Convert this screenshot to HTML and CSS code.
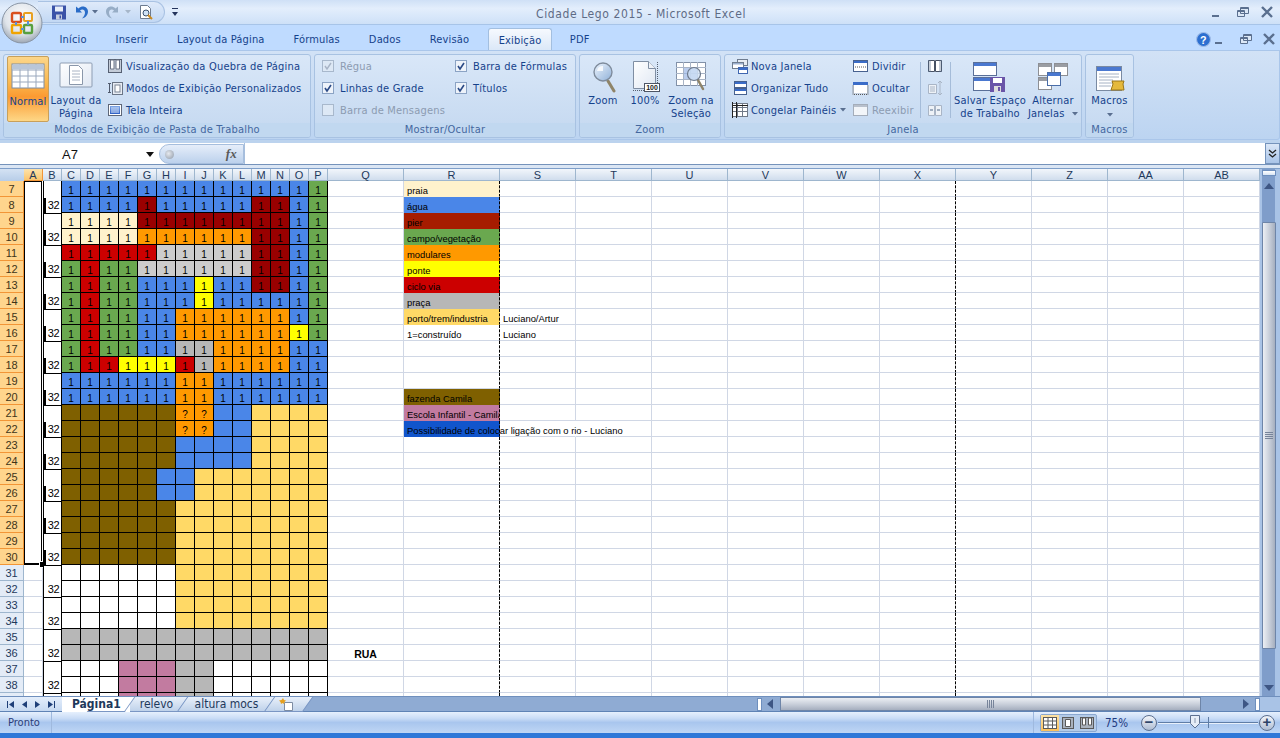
FILE: index.html
```html
<!DOCTYPE html>
<html lang="pt">
<head>
<meta charset="utf-8">
<title>Cidade Lego 2015 - Microsoft Excel</title>
<link rel="stylesheet" href="styles.css">
</head>
<body>
<svg class="defs" aria-hidden="true">
  <defs>
    <linearGradient id="gBlue" x1="0" y1="0" x2="0" y2="1"><stop offset="0" stop-color="#7fa6e6"/><stop offset="1" stop-color="#2d5fc4"/></linearGradient>
    <linearGradient id="gPage" x1="0" y1="0" x2="1" y2="1"><stop offset="0" stop-color="#fff"/><stop offset="1" stop-color="#dfe7f3"/></linearGradient>
    <linearGradient id="gGlass" x1="0" y1="0" x2="1" y2="1"><stop offset="0" stop-color="#eef5fd"/><stop offset="1" stop-color="#8fb0d8"/></linearGradient>
    <radialGradient id="gOrb" cx=".5" cy=".35" r=".7"><stop offset="0" stop-color="#fff"/><stop offset=".6" stop-color="#dfe4ea"/><stop offset="1" stop-color="#8f9aa8"/></radialGradient>
    <symbol id="chk" viewBox="0 0 12 12"><rect x=".5" y=".5" width="11" height="11" fill="#eef3fa" stroke="#8ba3c4"/><path d="M3 6l2 3 4-6" fill="none" stroke="#2b4a86" stroke-width="1.6"/></symbol>
    <symbol id="chkoff" viewBox="0 0 12 12"><rect x=".5" y=".5" width="11" height="11" fill="#dde8f5" stroke="#a8b8cc"/><path d="M3 6l2 3 4-6" fill="none" stroke="#a8b4c6" stroke-width="1.4"/></symbol>
    <symbol id="empty" viewBox="0 0 12 12"><rect x=".5" y=".5" width="11" height="11" fill="#dde8f5" stroke="#a8b8cc"/></symbol>
  </defs>
</svg>

<div class="app">
  <svg class="orb" viewBox="0 0 42 42" aria-hidden="true">
    <circle cx="21" cy="21" r="20" fill="url(#gOrb)" stroke="#8a96a6"/>
    <rect x="11" y="11" width="9" height="9" rx="1.5" fill="none" stroke="#d9501e" stroke-width="2.4"/>
    <rect x="23" y="11" width="8" height="8" rx="1" fill="none" stroke="#e8a020" stroke-width="2"/>
    <rect x="11" y="23" width="9" height="8" rx="1" fill="none" stroke="#f0a400" stroke-width="2.4"/>
    <rect x="23" y="23" width="8" height="8" rx="1" fill="none" stroke="#58a040" stroke-width="2.4"/>
    <path d="M20 15h3M15 20v3M27 19v4M20 27h3" stroke="#5b90d8" stroke-width="2"/>
  </svg>

  <header class="titlebar">
    <div class="tb-left">
      <div class="qa">
        <svg class="qi" viewBox="0 0 14 14"><path d="M0 0h14v14H0z" fill="#3a52a8"/><path d="M3 1h8v5H3z" fill="#e8eef8"/><path d="M4 9h6v5H4z" fill="#c7cfdf"/><path d="M7.5 10h1.500v3H7.500z" fill="#3a52a8"/></svg>
        <svg class="qi m9 w13" viewBox="0 0 13 14"><path d="M1 1v6h6L5 5c2-2 5-1 5 2 0 2-1 4-3 6 4-1 6-4 6-7C13 2 8-1 3.500 3z" fill="#2a6cc8"/></svg>
        <svg class="dd m4" viewBox="0 0 6 4"><path d="M0 0h6L3 3.500z" fill="#5a6f90"/></svg>
        <svg class="qi m8 w13" viewBox="0 0 13 14"><path d="M12 1v6H6l2-2C6 3 3 4 3 7c0 2 1 4 3 6-4-1-6-4-6-7C0 2 5-1 9.500 3z" fill="#97adc6"/></svg>
        <svg class="dd m6" viewBox="0 0 6 4"><path d="M0 0h6L3 3.500z" fill="#a6b6c9"/></svg>
        <svg class="qi m8" viewBox="0 0 14 15"><path d="M1.500.500h7l3 3v10h-10z" fill="#fff" stroke="#6d7b8f"/><circle cx="7" cy="8" r="3" fill="#cfe2f6" stroke="#39506e"/><path d="M9 10l4 4" stroke="#c98a20" stroke-width="2"/></svg>
      </div>
      <svg class="custom" viewBox="0 0 7 9"><path d="M0 0h6v1H0zM0 4h6L3 8z" fill="#24345c"/></svg>
    </div>
    <h1 class="doc-title">Cidade Lego 2015 - Microsoft Excel</h1>
    <div class="winbtns">
      <svg class="wb" viewBox="0 0 12 12"><path d="M1 9h7v2H1z" fill="#5a6f8f"/></svg>
      <svg class="wb m14" viewBox="0 0 12 12"><path d="M3.500 1.500h8v6h-8zM.5 4.500h7v6h-7z" fill="#dce8f6" stroke="#5a6f8f"/><path d="M1 4h6v2H1zM4 1h7v2H4z" fill="#5a6f8f"/></svg>
      <svg class="wb m12" viewBox="0 0 12 12"><path d="M1 1l10 10M11 1L1 11" stroke="#5a6f8f" stroke-width="2.400"/></svg>
    </div>
  </header>

  <nav class="tabs">
    <span class="tab">Início</span>
    <span class="tab">Inserir</span>
    <span class="tab">Layout da Página</span>
    <span class="tab">Fórmulas</span>
    <span class="tab">Dados</span>
    <span class="tab">Revisão</span>
    <span class="tab active">Exibição</span>
    <span class="tab">PDF</span>
    <div class="winbtns inner">
      <svg class="help" viewBox="0 0 14 14"><circle cx="7" cy="7" r="6.500" fill="#2c6fd0" stroke="#9fbce8"/><text x="7" y="11" class="helpq">?</text></svg>
      <svg class="wb m3" viewBox="0 0 12 12"><path d="M1 9h7v2H1z" fill="#5a6f8f"/></svg>
      <svg class="wb m14" viewBox="0 0 12 12"><path d="M3.500 1.500h8v6h-8zM.5 4.500h7v6h-7z" fill="#dce8f6" stroke="#5a6f8f"/><path d="M1 4h6v2H1zM4 1h7v2H4z" fill="#5a6f8f"/></svg>
      <svg class="wb m11" viewBox="0 0 12 12"><path d="M1 1l10 10M11 1L1 11" stroke="#5a6f8f" stroke-width="2.400"/></svg>
    </div>
  </nav>

  <section class="ribbon">
    <div class="group g1">
      <div class="gbody">
        <div class="lg normal">
          <svg class="ic-lg" viewBox="0 0 36 34"><rect x="2" y="4" width="32" height="24" fill="#fff" stroke="#7d8ca3"/><path d="M2 10h32M2 16h32M2 22h32M10 4v24M18 4v24M26 4v24" stroke="#9aa8bd"/><rect x="2.500" y="4.500" width="31" height="5" fill="#b9c6d8"/></svg>
          <span>Normal</span>
        </div>
        <div class="lg layout">
          <svg class="ic-lg" viewBox="0 0 36 34"><rect x="2" y="4" width="32" height="24" rx="1" fill="url(#gPage)" stroke="#8d9db3"/><path d="M11.500 6.500h9l4 4v15h-13z" fill="#fff" stroke="#8a97aa"/><path d="M14 12h8M14 15h8M14 18h8M14 21h8" stroke="#aab4c4"/></svg>
          <span>Layout da<br>Página</span>
        </div>
        <ul class="list l1">
          <li><svg class="ic-sm" viewBox="0 0 16 16"><rect x="1.500" y="1.500" width="13" height="13" fill="#c4ccd8" stroke="#566072"/><path d="M3.500 2v9h3.500V2zM9 2v9h3.500V2z" fill="#fff" stroke="#6c7485"/></svg>Visualização da Quebra de Página</li>
          <li><svg class="ic-sm" viewBox="0 0 16 16"><path d="M1 3.500h3M2.500 3.500v9M1 12.500h3" stroke="#505a6c" fill="none"/><rect x="5.500" y="2.500" width="10" height="12" fill="#e8edf4" stroke="#6a7586"/><rect x="8" y="5" width="5" height="7" fill="#fff" stroke="#7b8595"/></svg>Modos de Exibição Personalizados</li>
          <li><svg class="ic-sm" viewBox="0 0 16 16"><rect x="1.500" y="2.500" width="13" height="11" fill="#fff" stroke="#5e6778"/><rect x="3" y="4" width="10" height="8" fill="url(#gBlue)"/><path d="M4 6h8M4 8h8M4 10h8" stroke="#dce8fa"/></svg>Tela Inteira</li>
        </ul>
      </div>
      <div class="gfoot">Modos de Exibição de Pasta de Trabalho</div>
    </div>

    <div class="group g2">
      <div class="gbody">
        <ul class="list checks c1">
          <li class="off"><svg class="cb"><use href="#chkoff"/></svg>Régua</li>
          <li><svg class="cb"><use href="#chk"/></svg>Linhas de Grade</li>
          <li class="off"><svg class="cb"><use href="#empty"/></svg>Barra de Mensagens</li>
        </ul>
        <ul class="list checks">
          <li><svg class="cb"><use href="#chk"/></svg>Barra de Fórmulas</li>
          <li><svg class="cb"><use href="#chk"/></svg>Títulos</li>
        </ul>
      </div>
      <div class="gfoot">Mostrar/Ocultar</div>
    </div>

    <div class="group g3">
      <div class="gbody">
        <div class="lg z1">
          <svg class="ic-lg" viewBox="0 0 36 34"><path d="M23 22l6 10" stroke="#8f8468" stroke-width="3" stroke-linecap="round"/><circle cx="18" cy="13" r="9" fill="url(#gGlass)" stroke="#7f8c9c" stroke-width="1.400"/><path d="M12 12a6 6 0 0 1 6-5v5z" fill="#fff" opacity=".8"/></svg>
          <span>Zoom</span>
        </div>
        <div class="lg z2">
          <svg class="ic-lg" viewBox="0 0 36 34"><path d="M6.500 2.500h15l7 7v20h-22z" fill="url(#gPage)" stroke="#7f8ea3"/><path d="M21.500 2.500v7h7" fill="#eef2f8" stroke="#7f8ea3"/><path d="M30.500 3v27M6 31.500h24" stroke="#56606f" stroke-dasharray="1 1"/><rect x="17.500" y="24.500" width="15" height="8" fill="#fff" stroke="#4d5565"/><text x="25" y="31.200" class="pct">100</text></svg>
          <span>100%</span>
        </div>
        <div class="lg z3">
          <svg class="ic-lg" viewBox="0 0 36 34"><rect x="3.500" y="3.500" width="29" height="23" fill="#fff" stroke="#8291a8"/><path d="M3 8.500h30M3 14.500h30M3 20.500h30M10.500 3v24M17.500 3v24M24.500 3v24" stroke="#a8b4c6"/><rect x="11" y="9" width="13" height="11" fill="#9bb7e6" opacity=".7"/><path d="M25 21l5 9" stroke="#8f8468" stroke-width="2.500" stroke-linecap="round"/><circle cx="21" cy="15" r="6.500" fill="#cfe0f4" fill-opacity=".75" stroke="#6e7a8c" stroke-width="1.200"/></svg>
          <span>Zoom na<br>Seleção</span>
        </div>
      </div>
      <div class="gfoot">Zoom</div>
    </div>

    <div class="group g4">
      <div class="gbody">
        <ul class="list w1">
          <li><svg class="ic-sm wide" viewBox="0 0 18 16"><rect x="6.500" y="1.500" width="10" height="6" fill="#e8edf4" stroke="#6f7c8f"/><rect x="1.500" y="4.500" width="11" height="6" fill="#fff" stroke="#6f7c8f"/><rect x="7.500" y="9.500" width="9" height="6" fill="#fff" stroke="#3f66b0"/><path d="M8 10h8v2H8z" fill="#3a6cc8"/><path d="M2 5h10v1.500H2z" fill="#9bb0cf"/></svg>Nova Janela</li>
          <li><svg class="ic-sm wide" viewBox="0 0 18 16"><rect x="3.500" y="1.500" width="12" height="6" fill="#fff" stroke="#47618f"/><rect x="3.500" y="8.500" width="12" height="6" fill="#fff" stroke="#47618f"/><path d="M4 2h11v2H4zM4 9h11v2H4z" fill="#3a6cc8"/></svg>Organizar Tudo</li>
          <li><svg class="ic-sm wide" viewBox="0 0 18 16"><rect x="1.500" y="1.500" width="15" height="13" fill="#fff" stroke="#717a88"/><path d="M1 5.500h16M1 9.500h16M6.500 1v14M11.500 1v14" stroke="#717a88"/><path d="M1 0h1v16H1zM5 0h1v16H5zM1 3h16v1H1z" fill="#222"/></svg>Congelar Painéis <svg class="dd s" viewBox="0 0 6 4"><path d="M0 0h6L3 3.500z" fill="#5a6f90"/></svg></li>
        </ul>
        <ul class="list w2">
          <li><svg class="ic-sm wide" viewBox="0 0 18 16"><rect x="1.500" y="2.500" width="14" height="11" fill="#fff" stroke="#47618f"/><path d="M2 3h13v2H2z" fill="#3a6cc8"/><path d="M3 9h11" stroke="#555" stroke-dasharray="1 1"/></svg>Dividir</li>
          <li><svg class="ic-sm wide" viewBox="0 0 18 16"><rect x="1.500" y="2.500" width="14" height="11" fill="#fff" stroke="#c8d2e0"/><path d="M1 2h15v3H1z" fill="#3a6cc8"/><path d="M1 5.500v9h15v-9" fill="none" stroke="#555" stroke-dasharray="1 1"/></svg>Ocultar</li>
          <li class="off"><svg class="ic-sm wide" viewBox="0 0 18 16"><rect x="1.500" y="2.500" width="14" height="11" fill="#f2f5f9" stroke="#a4adba"/><path d="M2 3h13v2H2z" fill="#b8c0cc"/></svg>Reexibir</li>
        </ul>
        <div class="sep"></div>
        <ul class="list tiny">
          <li><svg class="ic-sm" viewBox="0 0 16 16"><path d="M1.500 2.500h6v11h-6zM8.500 2.500h6v11h-6z" fill="#fff" stroke="#485264"/><path d="M1 2h3v12H1zM12 2h3v12h-3z" fill="#5a6f8f" opacity=".35"/></svg></li>
          <li><svg class="ic-sm" viewBox="0 0 16 16"><path d="M1.500 4.500h8v9h-8z" fill="#eef2f7" stroke="#a9b5c6"/><path d="M3 7h5M3 9h5M3 11h5" stroke="#a9b5c6"/><path d="M13 1v14M11 3l2-2 2 2M11 13l2 2 2-2" fill="none" stroke="#a9b5c6"/></svg></li>
          <li><svg class="ic-sm" viewBox="0 0 16 16"><path d="M1.500 3.500h6v10h-6zM8.500 3.500h6v10h-6z" fill="#eef2f7" stroke="#a9b5c6"/><path d="M3 8h3M13 8h-3" stroke="#8496ae" stroke-width="1.500"/></svg></li>
        </ul>
        <div class="sep s2"></div>
        <div class="lg save">
          <svg class="ic-lg" viewBox="0 0 36 34"><rect x="1.500" y="3.500" width="23" height="13" fill="#fff" stroke="#5a6f98"/><path d="M2 4h22v3H2z" fill="#4a78d0"/><rect x="1.500" y="18.500" width="23" height="13" fill="#fff" stroke="#5a6f98"/><path d="M2 19h22v3H2z" fill="#4a78d0"/><rect x="18" y="18" width="15" height="15" fill="#6a55a8"/><path d="M21 19h9v5h-9z" fill="#fff"/><path d="M22 27h7v6h-7z" fill="#ddd"/><path d="M26 28h2v4h-2z" fill="#6a55a8"/></svg>
          <span>Salvar Espaço<br>de Trabalho</span>
        </div>
        <div class="lg alt">
          <svg class="ic-lg" viewBox="0 0 36 34"><g fill="#fff" stroke="#8d8f94"><rect x="3.500" y="4.500" width="13" height="12"/><rect x="19.500" y="4.500" width="13" height="12"/><rect x="3.500" y="18.500" width="13" height="12"/></g><path d="M4 5h12v3H4zM20 5h12v3H20zM4 19h12v3H4z" fill="#9a9da3"/><rect x="12.500" y="13.500" width="13" height="13" fill="#fff" stroke="#4a6da8"/><path d="M13 14h12v3H13z" fill="#4a78d0"/></svg>
          <span>Alternar<br>Janelas <svg class="dd s" viewBox="0 0 6 4"><path d="M0 0h6L3 3.500z" fill="#5a6f90"/></svg></span>
        </div>
      </div>
      <div class="gfoot">Janela</div>
    </div>

    <div class="group g5">
      <div class="gbody">
        <div class="lg mac">
          <svg class="ic-lg" viewBox="0 0 36 34"><rect x="4.500" y="7.500" width="25" height="24" fill="#fff" stroke="#7a8aa2"/><path d="M5 8h24v4H5z" fill="#4a78d0"/><path d="M7 15h20M7 18h20M7 21h14M7 24h14M7 27h12" stroke="#a6b2c4"/><path d="M20 22h12l-1 3 1 6H19l2-6z" fill="#e5b93c" stroke="#9a7618"/></svg>
          <span>Macros<br><svg class="dd" viewBox="0 0 6 4"><path d="M0 0h6L3 3.500z" fill="#5a6f90"/></svg></span>
        </div>
      </div>
      <div class="gfoot">Macros</div>
    </div>
  </section>

  <div class="fbar">
    <div class="fbar-row">
      <div class="namebox"><span>A7</span><svg class="nb-arrow" viewBox="0 0 8 5"><path d="M0 0h8L4 5z" fill="#111"/></svg></div>
      <div class="fxpill"><span class="dot"></span><span class="fx">fx</span></div>
      <div class="finput"></div>
      <div class="fexp"><svg viewBox="0 0 9 10"><path d="M1 1l3.500 3L8 1M1 5l3.500 3L8 5" fill="none" stroke="#222" stroke-width="1.300"/></svg></div>
    </div>
  </div>

  <div class="workspace">
    <div class="sheet" id="sheet"></div>
    <div class="vscroll">
      <div class="vsplit"></div>
      <svg class="arrow" viewBox="0 0 10 6"><path d="M5 0l5 6H0z" fill="#3e5684"/></svg>
      <div class="vthumb"><span class="vgrip"></span></div>
      <svg class="arrow" viewBox="0 0 10 6"><path d="M5 6L0 0h10z" fill="#3e5684"/></svg>
    </div>
  </div>

  <div class="tabbar">
    <div class="navs">
      <svg viewBox="0 0 9 9"><path d="M1 1v7h1V1zM8 1v7L3 4.500z" fill="#1f3f78"/></svg>
      <svg viewBox="0 0 9 9"><path d="M7 1v7L2 4.500z" fill="#1f3f78"/></svg>
      <svg viewBox="0 0 9 9"><path d="M2 1v7l5-3.500z" fill="#1f3f78"/></svg>
      <svg viewBox="0 0 9 9"><path d="M8 1v7H7V1zM1 1v7l5-3.500z" fill="#1f3f78"/></svg>
    </div>
    <div class="stab on">Página1</div>
    <div class="stab">relevo</div>
    <div class="stab">altura mocs</div>
    <div class="stab newsheet"><svg viewBox="0 0 16 13"><path d="M5.500 4.500h8v8h-8z" fill="#fff" stroke="#7d8ca3"/><path d="M4 0l1 2 2 .5L5.500 4 5 6 3.500 5 2 6l-.5-2L0 2.500 2.500 2z" fill="#e5a020"/></svg></div>
    <div class="htrack">
      <span class="hsplit"></span>
      <svg class="harrow lft" viewBox="0 0 6 10"><path d="M6 0v10L0 5z" fill="#3e5684"/></svg>
      <div class="hthumb"><span class="hgrip"></span></div>
      <svg class="harrow rgt" viewBox="0 0 6 10"><path d="M0 0v10l6-5z" fill="#3e5684"/></svg>
      <span class="hsplit end"></span>
    </div>
    <div class="hcorner"></div>
  </div>

  <footer class="status">
    <div class="st-ready">Pronto</div>
    <div class="st-fill"></div>
    <div class="st-views">
      <span class="vb on"><svg viewBox="0 0 14 12"><rect x=".5" y=".5" width="13" height="11" fill="#fff" stroke="#5a5a5a"/><path d="M0 4h14M0 8h14M5 0v12M9.500 0v12" stroke="#5a5a5a"/></svg></span>
      <span class="vb"><svg viewBox="0 0 14 12"><rect x="1.500" y=".5" width="11" height="11" fill="#aab2bd" stroke="#5a5a5a"/><path d="M4.500 2.500h5v7h-5z" fill="#fff" stroke="#5a5a5a"/></svg></span>
      <span class="vb"><svg viewBox="0 0 14 12"><rect x=".5" y=".5" width="13" height="11" fill="#aab2bd" stroke="#5a5a5a"/><path d="M2.500 1h3v7h-3zM8.500 1h3v7h-3z" fill="#fff" stroke="#5a5a5a"/></svg></span>
    </div>
    <span class="st-zoom">75%</span>
    <span class="zbtn">&#8722;</span>
    <div class="slider"><span class="tick"></span><svg class="knob" viewBox="0 0 10 14"><path d="M.5.500h9v8L5 13 .5 8.500z" fill="#e6edf7" stroke="#5c6f8f"/><path d="M5 3v5" stroke="#8896ac"/></svg></div>
    <span class="zbtn">+</span>
  </footer>
  <div class="stripe"></div>
</div>
<script src="sheet.js"></script>
</body>
</html>
```
FILE: styles.css
```css
*{box-sizing:border-box}
html,body{margin:0;padding:0;height:100%;overflow:hidden}
body{font-family:"DejaVu Sans Condensed","DejaVu Sans",sans-serif;font-size:11px;letter-spacing:.2px;color:#15428b;background:#bfdbff}
ul{list-style:none;margin:0;padding:0}
.defs{position:absolute;width:0;height:0}
.app{position:relative;width:1280px;height:738px;display:flex;flex-direction:column;overflow:hidden}
.orb{position:absolute;left:1px;top:2px;width:42px;height:42px;z-index:3}

.titlebar{height:25px;display:grid;grid-template-columns:1fr auto 1fr;align-items:center;background:linear-gradient(#cfe0f6 0,#e3eefc 35%,#d6e6fa 75%,#cde0f7 100%);border-bottom:1px solid #a7c4e8}
.tb-left{display:flex;align-items:center;padding-left:38px}
.qa{height:22px;width:127px;padding-left:14px;display:flex;align-items:center;background:linear-gradient(#dfeafa,#c2d8f4);border:1px solid #a9c2e3;border-left:0;border-radius:0 11px 11px 0}
.qi{width:14px;height:15px;flex:none}
.w13{width:13px}
.m3{margin-left:3px}.m4{margin-left:4px}.m6{margin-left:6px}.m8{margin-left:8px}.m9{margin-left:9px}.m11{margin-left:11px}.m12{margin-left:12px}.m14{margin-left:14px}
.dd{width:6px;height:4px;flex:none}
.dd.s{display:inline-block;vertical-align:1px;margin-left:4px}
.custom{width:7px;height:9px;margin-left:7px}
.doc-title{margin:0;padding:4px 0 0 2px;font-size:12px;font-weight:normal;color:#5e6b85;letter-spacing:.6px}
.winbtns{display:flex;align-items:center;justify-content:flex-end;padding-right:7px}
.wb{width:12px;height:12px;flex:none}

.tabs{height:25px;display:flex;align-items:flex-end;padding-left:45px;background:#bfdbff;position:relative}
.tab{height:22px;line-height:24px;padding:0 14.500px;white-space:nowrap;letter-spacing:.15px}
.tab.active{padding:0 10px;margin:0 3px 0 4px;background:linear-gradient(#f6f9fe,#dbe8f8);border:1px solid #a3bfe0;border-bottom:0;border-radius:3px 3px 0 0}
.winbtns.inner{margin-left:auto;height:22px;padding-right:5px}
.help{width:15px;height:15px}
.helpq{font:bold 10px "Liberation Sans",sans-serif;fill:#fff;text-anchor:middle}
.pct{font:bold 7px "Liberation Sans",sans-serif;fill:#222;text-anchor:middle;letter-spacing:0}

.ribbon{height:90px;display:flex;gap:3px;padding:3px 0 3px 3px;background:linear-gradient(#d2e2f6,#bcd4f1);border:1px solid #aac6ea;border-width:1px 1px 1px 0;border-radius:0 0 3px 0}
.group{height:84px;display:flex;flex-direction:column;border:1px solid #a8c2e2;border-radius:3px;background:linear-gradient(#d9e7f8,#c4d8f0);overflow:hidden}
.g1{width:308px}.g2{width:262px}.g3{width:142px}.g4{width:358px}.g5{width:49px}
.gbody{height:68px;display:flex;align-items:flex-start;padding-top:1px;flex:none}
.gfoot{flex:1;background:#c1d8f0;color:#44679f;text-align:center;line-height:14px}

.lg{display:flex;flex-direction:column;align-items:center;text-align:center;line-height:13px;flex:none;white-space:nowrap}
.ic-lg{width:36px;height:34px;margin:3px 0 1px;flex:none}
.normal{width:42px;height:66px;margin-left:3px;background:linear-gradient(#fcd68a 0,#fbb84e 40%,#fb9a32 62%,#fdd786 100%);border:1px solid #c8a05a;border-radius:2px}
.layout{width:50px;margin-left:2px}
.list{margin-top:-1px}
.l1{margin-left:6px}
.list li{height:22px;display:flex;align-items:center;white-space:nowrap}
.ic-sm{width:16px;height:16px;margin-right:3px;flex:none}
.ic-sm.wide{width:18px;margin-right:2px}
.list .off{color:#8c9bb1}
.cb{width:12px;height:12px;margin-right:6px;flex:none}
.checks.c1{margin-left:7px;width:133px}
.z1{width:40px;margin-left:3px}.z2{width:36px;margin-left:4px}.z3{width:50px;margin-left:3px}
.w1{width:121px;margin-left:6px}
.w2{width:68px}
.sep{width:1px;height:56px;margin-top:6px;background:#a5bcd9;flex:none}
.tiny{margin-left:6px;width:18px}
.s2{margin-left:5px}
.save{width:70px;margin-left:4px}
.alt{width:48px;margin-left:4px}
.mac{width:47px}

.fbar{height:28px;padding-top:3px;background:linear-gradient(#bcd3ee 0 3px,#dbe6f4 3px)}
.fbar-row{height:22px;display:flex;background:#fff;border-bottom:1px solid #7593bb}
.namebox{width:159px;display:flex;align-items:center;padding-left:62px;padding-top:1px;font:13px "Liberation Sans",sans-serif;letter-spacing:0;color:#111;position:relative}
.nb-arrow{width:8px;height:5px;margin-left:auto;margin-right:5px}
.fxpill{width:85px;margin:1px 0 0;height:20px;display:flex;align-items:center;justify-content:space-between;padding:0 6px 0 5px;background:linear-gradient(#e6eefa,#bcd1ec);border:1px solid #a6bedd;border-radius:10px 0 0 10px}
.dot{width:9px;height:9px;border-radius:50%;background:radial-gradient(circle at 40% 40%,#e6e9ee,#8c97a6)}
.fx{font:italic bold 13px "Liberation Serif",serif;color:#5a5a5a}
.finput{flex:1;border-left:1px solid #a6bedd}
.fexp{width:15px;display:flex;align-items:center;justify-content:center;background:linear-gradient(#dbe7f7,#a9c4e8);border:1px solid #7593bb}
.fexp svg{width:9px;height:10px}

.workspace{height:528px;display:flex;border-top:1px solid #7f9fc9}
.sheet{width:1260px;height:527px;overflow:hidden;background:#fff;display:grid;grid-template-columns:24px 19px 19px repeat(14,19px) 76px 96px repeat(10,76px);grid-auto-rows:16px;grid-template-rows:12px;font:10px "Liberation Sans",sans-serif;letter-spacing:0;color:#000}
.ch{background:linear-gradient(#f2f6fb,#d0dded);border-right:1px solid #9eb6ce;border-bottom:1px solid #9eb6ce;font-size:11px;line-height:12px;text-align:center;color:#1e395b}
.ch.sel{background:linear-gradient(#fde2ab,#fbc66e);border-bottom-color:#f29536;border-right-color:#f29536}
.corner{background:linear-gradient(#d4e2f3,#b7cde8);position:relative}
.rh{background:#e4ecf7;border-right:1px solid #9eb6ce;border-bottom:1px solid #9eb6ce;color:#1e395b;font-size:11px;text-align:center;line-height:17px}
.rh.sel{background:#ffd58d;border-right-color:#f29536;border-bottom-color:#f29536;color:#3e3418}
.c{border-right:1px solid #d0d7e5;border-bottom:1px solid #d0d7e5;padding:3px 0 0 3px;font-size:9.4px;line-height:13px;white-space:nowrap;min-width:0}
.c.dash{border-right:1px dashed #000}
.c.fill{border-bottom-color:transparent}
.c.noline{border-right-color:transparent}
.c.fill-p{overflow:hidden}
.c.rua{font-weight:bold;font-size:10.5px;text-align:center;padding-left:0}
.aSel{grid-row:span 24;margin-right:1px;background:#fff;border:solid #000;border-width:1px 1px 2px 1px;position:relative}
.handle{position:absolute;right:-4px;bottom:-4px;width:5px;height:5px;background:#000;border:1px solid #fff;box-sizing:content-box;margin:-1px}
.bm{grid-row:span 2;background:#fff;border:solid #000;border-width:1px 1px 0 1px;font-size:11px;letter-spacing:-.4px;display:flex;align-items:flex-end;justify-content:center;line-height:15px;position:relative;padding-left:2px}
.bm.first{border-top:0}
.bm.sel::before{content:"";position:absolute;left:0;bottom:0;width:2px;height:15px;background:#000}
.k{border-right:1px solid #000;border-bottom:1px solid #000;text-align:center;line-height:13px;padding-top:3px}
.k-b,.fill-b{background:#4a86e8}
.k-d{background:#990000}
.fill-d{background:#a61c00}
.k-c,.fill-c{background:#fff2cc}
.k-o,.fill-o{background:#ff9900}
.k-r,.fill-r{background:#cc0000}
.k-s{background:#cccccc}
.k-a,.fill-a{background:#b7b7b7}
.k-y,.fill-y{background:#ffff00}
.k-g,.fill-g{background:#6aa84f}
.k-n,.fill-n{background:#7f6000}
.k-t,.fill-t{background:#ffd966}
.k-p,.fill-p{background:#c27ba0}
.fill-u{background:#1155cc}
.k-w{background:#fff}

.vscroll{width:20px;display:flex;flex-direction:column;align-items:center;padding:0 3px 5px 0;background:linear-gradient(90deg,#a9c3e6 0 2px,#7f9dca 2px 15px,#a9c3e6 15px)}
.vsplit{width:14px;height:6px;margin-top:1px;background:linear-gradient(#fff,#d8e4f4);border:1px solid #6e8fbe;flex:none}
.arrow{width:10px;height:6px;margin-top:7px;flex:none}
.vthumb{flex:1;width:14px;margin:33px 0 29px;background:linear-gradient(90deg,#eceff4,#c3cad6 60%,#a5aebe);border:1px solid #6e85a8;border-radius:1px;display:flex;align-items:center;justify-content:center}
.vgrip{width:8px;height:8px;background:repeating-linear-gradient(#77849a 0 1px,transparent 1px 2px)}

.tabbar{height:16px;display:flex;background:#8fabd3;border-top:1px solid #6f8fbd;border-bottom:1px solid #5f83b5}
.navs{width:62px;display:flex;align-items:center;justify-content:space-around;padding:0 4px;background:linear-gradient(#e4eefb,#c6d9f1);flex:none}
.navs svg{width:9px;height:9px}
.stab{position:relative;height:15px;padding:0 10px;line-height:14px;font-size:12px;letter-spacing:0;color:#1e395b;z-index:0;flex:none}
.stab::before{content:"";position:absolute;inset:0;z-index:-1;transform:skewX(-35deg);background:linear-gradient(#e9f0fa,#bfd2ea);border-right:1px solid #7a96c4;border-bottom:1px solid #7a96c4}
.stab.on{width:68px;font-weight:bold;padding:0 0 0 10px;color:#1e395b;z-index:1;background:#fff}
.stab.on::before{background:#fff;left:30px}
.stab:nth-child(3){width:53px;text-align:center;padding:0}
.stab:nth-child(4){width:87px;text-align:center;padding:0}
.stab.newsheet{width:38px;padding:1px 0 0 9px}
.newsheet svg{width:16px;height:13px}
.htrack{flex:1;display:flex;align-items:center;min-width:0;padding-left:449px}
.hsplit{width:5px;height:13px;background:#fff;border:1px solid #6e8fbe;flex:none}
.harrow{width:6px;height:10px;flex:none}
.lft{margin:0 7px 0 5px}
.hthumb{width:421px;height:14px;display:flex;align-items:center;justify-content:center;background:linear-gradient(#eceff4,#c3cad6 60%,#a5aebe);border:1px solid #6e85a8;flex:none}
.hgrip{width:8px;height:8px;background:repeating-linear-gradient(90deg,#77849a 0 1px,transparent 1px 2px)}
.rgt{margin-left:42px}
.hsplit.end{margin-left:6px}
.hcorner{width:20px;background:#a9c3e6;flex:none}

.status{height:21px;display:flex;align-items:center;background:linear-gradient(#e6f0fd 0,#c9dcf6 30%,#a9c6ee 50%,#bfd6f5 100%);color:#2a3c78;letter-spacing:0}
.st-ready{width:52px;height:100%;line-height:21px;padding-left:8px;font-size:11px;border-right:1px solid #9fb9de}
.st-fill{width:982px;height:100%;border-right:1px solid #9fb9de}
.st-views{width:57px;height:18px;margin-left:6px;display:flex;background:#b4cbe8;border:1px solid #8aa7cf;border-radius:2px}
.vb{flex:1;display:flex;align-items:center;justify-content:center}
.vb.on{background:linear-gradient(#fde3a6,#fbc05c)}
.vb svg{width:14px;height:12px}
.st-zoom{margin-left:8px;width:36px;font-size:11.5px;color:#1e3a80}
.zbtn{width:16px;height:16px;border-radius:50%;border:1.500px solid #5c6f8f;background:linear-gradient(#f3f6fb,#aebcd2);font:bold 15px/12px "Liberation Sans",sans-serif;color:#2f4468;text-align:center;flex:none}
.slider{width:100px;height:1px;background:#5f7da6;position:relative;margin:0 1px;box-shadow:0 1px #e8f0fb}
.tick{position:absolute;left:50px;top:-5px;width:1px;height:11px;background:#5f7da6}
.knob{position:absolute;left:32px;top:-7px;width:10px;height:14px}
.stripe{height:5px;background:#2f78d8}
```
FILE: sheet.js
```js
const COLS = ["A","B","C","D","E","F","G","H","I","J","K","L","M","N","O","P","Q","R","S","T","U","V","W","X","Y","Z","AA","AB"];
const MAP = {
  7:"bbbbbbbbbbbbbg",8:"bbbbdbbbbbddbg",9:"ccccddddddddbg",10:"ccccooooooddbg",
  11:"rrrrrsssssddbg",12:"grggssssssddbg",13:"grggbbbybbddbg",14:"grggbbbybbbbbg",
  15:"grggbboooooobg",16:"grggbbooooooyg",17:"grggbbaaoooobb",18:"grryyyraoooobb",
  19:"bbbbbboobbbbbb",20:"bbbbbboobbbbbb",21:"nnnnnnoobbtttt",22:"nnnnnnoobbtttt",
  23:"nnnnnnbbbbtttt",24:"nnnnnnbbbbtttt",25:"nnnnnbbttttttt",26:"nnnnnbbttttttt",
  27:"nnnnnntttttttt",28:"nnnnnntttttttt",29:"nnnnnntttttttt",30:"nnnnnntttttttt",
  31:"wwwwwwtttttttt",32:"wwwwwwtttttttt",33:"wwwwwwtttttttt",34:"wwwwwwtttttttt",
  35:"aaaaaaaaaaaaaa",36:"aaaaaaaaaaaaaa",37:"wwwpppaawwwwww",38:"wwwpppaawwwwww",39:"wwwpppaawwwwww"
};
const LEGEND = {
  7:["c","praia"],8:["b","água"],9:["d","pier"],10:["g","campo/vegetação"],11:["o","modulares"],
  12:["y","ponte"],13:["r","ciclo via"],14:["a","praça"],15:["t","porto/trem/industria"],
  16:["","1=construído"],20:["n","fazenda Camila"],21:["p","Escola Infantil - Camila"],
  22:["u","Possibilidade de colocar ligação com o rio - Luciano"]
};
const NOTES = {15:"Luciano/Artur",16:"Luciano"};

let html = '<div class="corner"></div>';
COLS.forEach(c => { html += `<div class="ch${c === "A" ? " sel" : ""}">${c}</div>`; });

for (let r = 7; r <= 39; r++) {
  const sel = r <= 30;
  html += `<div class="rh${sel ? " sel" : ""}">${r}</div>`;
  if (r === 7) html += '<div class="aSel"><span class="handle"></span></div>';
  if (r > 30) html += '<div class="c"></div>';
  if (r % 2 === 1) {
    html += `<div class="bm${r === 7 ? " first" : ""}${sel ? " sel" : ""}">32</div>`;
  }
  [...MAP[r]].forEach((k, i) => {
    const isQ = r === 21 || r === 22;
    const txt = r <= 20 ? "1" : (isQ && (i === 6 || i === 7) ? "?" : "");
    html += `<div class="k k-${k}">${txt}</div>`;
  });
  html += `<div class="c${r === 36 ? " rua" : ""}">${r === 36 ? "RUA" : ""}</div>`;
  const lg = LEGEND[r];
  html += lg
    ? `<div class="c dash${lg[0] ? " fill fill-" + lg[0] : ""}">${lg[1]}</div>`
    : '<div class="c dash"></div>';
  html += `<div class="c${r === 22 ? " noline" : ""}">${NOTES[r] || ""}</div>`;
  for (let i = 0; i < 9; i++) {
    html += `<div class="c${i === 4 ? " dash" : ""}"></div>`;
  }
}
document.getElementById("sheet").innerHTML = html;
```
